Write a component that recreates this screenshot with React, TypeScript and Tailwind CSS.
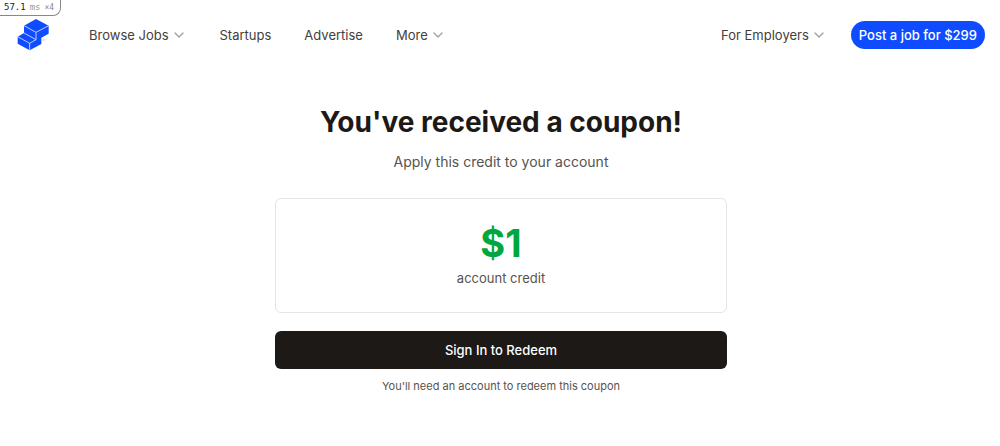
import { ChevronDown } from "lucide-react";

type NavItem = {
  label: string;
  hasMenu?: boolean;
};

const navItems: NavItem[] = [
  { label: "Browse Jobs", hasMenu: true },
  { label: "Startups" },
  { label: "Advertise" },
  { label: "More", hasMenu: true },
];

function Logo() {
  return (
    <svg viewBox="0 0 96 96" className="size-8" aria-hidden="true">
      <path d="M76 57L90 62L76 68Z" fill="#e7e5e4" />
      <path
        d="M57 0L95 20V44L73 56V75L38 94L2 74V53L21 42V20Z"
        fill="#0f4cff"
      />
      <path
        d="M21 20L57 40L95 20M57 40V62L38 73L2 53M38 73V94M21 42L57 62"
        fill="none"
        stroke="#dbe6ff"
        strokeWidth="2.5"
      />
    </svg>
  );
}

function NavEntry({ label, hasMenu }: NavItem) {
  if (!hasMenu) {
    return (
      <a href="#" className="text-[13px] leading-5">
        {label}
      </a>
    );
  }

  return (
    <button type="button" className="flex items-center gap-0.5 text-[13px] leading-5">
      {label}
      <ChevronDown className="size-4 text-stone-400" strokeWidth={2} />
    </button>
  );
}

function ProfilerBadge() {
  return (
    <div className="absolute top-0 left-0 flex h-4 items-center gap-1 rounded-br-lg border-r border-b border-[#888] bg-white pr-1.5 pl-1 font-['DejaVu_Sans_Mono',monospace] text-[9px] whitespace-nowrap text-[#222]">
      <span>57.1</span>
      <span className="text-[#999]">ms</span>
      <span className="text-[8px] text-[#888]">×4</span>
    </div>
  );
}

export default function App() {
  return (
    <div className="bg-white font-['Inter',sans-serif] text-stone-700">
      <ProfilerBadge />

      <header className="flex items-center justify-between pt-[19px] pr-[15px] pl-[17px]">
        <div className="flex items-center">
          <a href="#" aria-label="Home" className="mr-10">
            <Logo />
          </a>
          <nav className="flex items-center gap-[33px]">
            {navItems.map((item) => (
              <NavEntry key={item.label} {...item} />
            ))}
          </nav>
        </div>

        <div className="flex items-center gap-6">
          <NavEntry label="For Employers" hasMenu />
          <a
            href="#"
            className="rounded-full bg-[#0f4cff] px-2 py-1 text-[13px] leading-5 font-medium text-white"
          >
            Post a job for $299
          </a>
        </div>
      </header>

      {/* Coupon */}
      <main className="mx-auto w-full max-w-[454px] pt-[53px] pl-[2px] text-center">
        <h1 className="text-[28px] leading-9 font-bold whitespace-nowrap text-stone-900">
          You've received a coupon!
        </h1>
        <p className="mt-3 text-[14px] leading-5 text-stone-600">
          Apply this credit to your account
        </p>

        <section className="mt-[26px] rounded-md border border-stone-200 px-6 pt-6 pb-6">
          <p className="text-[38px] leading-10 font-bold text-green-600">$1</p>
          <p className="mt-[5px] text-[13px] leading-5 text-stone-600">account credit</p>
        </section>

        <button
          type="button"
          className="mt-[18px] w-full rounded-md bg-[#1c1917] py-[9px] text-[13px] leading-5 font-medium text-white"
        >
          Sign In to Redeem
        </button>
        <p className="mt-[7px] text-[11px] leading-5 text-stone-600">
          You'll need an account to redeem this coupon
        </p>
      </main>
    </div>
  );
}
